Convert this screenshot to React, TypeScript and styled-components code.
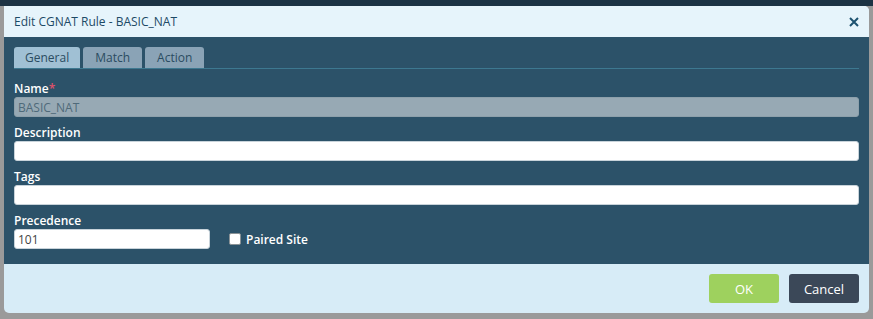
import React from 'react'
import styled, { createGlobalStyle } from 'styled-components'

const GlobalStyle = createGlobalStyle`
  html, body {
    margin: 0;
    padding: 0;
    background: #9a9a9a;
    font-family: "Open Sans", "Liberation Sans", sans-serif;
  }
`

const Page = styled.div`
  width: 873px;
  height: 319px;
  background: #9a9a9a;
  border-top: 6px solid #1c3344;
  box-sizing: border-box;
  padding: 0 4px;
`

const Dialog = styled.div`
  display: flex;
  flex-direction: column;
  height: 307px;
  border-radius: 0 5px 5px 5px;
  overflow: hidden;
  background: #d7ecf7;
`

const Header = styled.div`
  display: flex;
  align-items: center;
  justify-content: space-between;
  height: 31px;
  padding: 0 10px 0 10px;
  background: #e6f4fb;
`

const Title = styled.span`
  font-size: 12px;
  color: #1d4a66;
`

const CloseButton = styled.button`
  border: none;
  background: none;
  padding: 0;
  display: flex;
  cursor: pointer;
`

const Body = styled.div`
  background: #2c5269;
  padding: 10px 10px 0 10px;
  height: 227px;
  box-sizing: border-box;
`

const TabBar = styled.div`
  display: flex;
  gap: 3px;
  border-bottom: 1px solid #3d7890;
  margin-bottom: 12px;
`

const Tab = styled.div<{ $active?: boolean }>`
  height: 21px;
  min-width: 59px;
  box-sizing: border-box;
  padding: 0 11px;
  display: flex;
  align-items: center;
  justify-content: center;
  font-size: 12px;
  color: #2b4c61;
  background: ${({ $active }) => ($active ? '#a0c0d4' : '#8aa3b6')};
  border-radius: 3px 3px 0 0;
`

const Field = styled.div`
  display: flex;
  flex-direction: column;
  margin-bottom: 8px;
`

const Label = styled.label`
  font-size: 12px;
  font-weight: 600;
  color: #ffffff;
  line-height: 16px;
`

const Required = styled.span`
  color: #e0506a;
`

const Input = styled.input<{ $disabled?: boolean; $width?: number }>`
  box-sizing: border-box;
  height: 20px;
  width: ${({ $width }) => ($width ? `${$width}px` : '100%')};
  border: 1px solid ${({ $disabled }) => ($disabled ? '#8da0ab' : '#c8d3da')};
  border-radius: 3px;
  padding: 0 3px;
  font-family: "Open Sans", "Liberation Sans", sans-serif;
  font-size: 12px;
  color: ${({ $disabled }) => ($disabled ? '#4f6a7a' : '#444')};
  background: ${({ $disabled }) => ($disabled ? '#97a9b4' : '#ffffff')};
  outline: none;
`

const Row = styled.div`
  display: flex;
  align-items: center;
  gap: 19px;
`

const CheckLabel = styled.label`
  display: flex;
  align-items: center;
  gap: 5px;
  font-size: 12px;
  font-weight: 600;
  color: #ffffff;
`

const Box = styled.span`
  box-sizing: border-box;
  width: 12px;
  height: 12px;
  background: #fff;
  border: 1px solid #8a9296;
  border-radius: 2px;
`

const Footer = styled.div`
  flex: 1;
  display: flex;
  justify-content: flex-end;
  align-items: flex-start;
  gap: 10px;
  padding: 10px 10px 0 0;
`

const Button = styled.button<{ $primary?: boolean }>`
  width: 70px;
  height: 29px;
  border: none;
  border-radius: 3px;
  font-family: "Open Sans", "Liberation Sans", sans-serif;
  font-size: 13px;
  color: #fff;
  background: ${({ $primary }) => ($primary ? '#9ed15e' : '#3b4858')};
`

export default function App() {
  return (
    <>
      <GlobalStyle />
      <Page>
        <Dialog>
          <Header>
            <Title>Edit CGNAT Rule - BASIC_NAT</Title>
            <CloseButton>
              <svg width="10" height="10" viewBox="0 0 10 10">
                <path d="M1 1L9 9M9 1L1 9" stroke="#1d5270" strokeWidth="2" />
              </svg>
            </CloseButton>
          </Header>
          <Body>
            <TabBar>
              <Tab $active>General</Tab>
              <Tab>Match</Tab>
              <Tab>Action</Tab>
            </TabBar>
            <Field>
              <Label>
                Name<Required>*</Required>
              </Label>
              <Input $disabled readOnly value="BASIC_NAT" />
            </Field>
            <Field>
              <Label>Description</Label>
              <Input readOnly value="" />
            </Field>
            <Field>
              <Label>Tags</Label>
              <Input readOnly value="" />
            </Field>
            <Field>
              <Label>Precedence</Label>
              <Row>
                <Input $width={196} readOnly value="101" />
                <CheckLabel>
                  <Box />
                  Paired Site
                </CheckLabel>
              </Row>
            </Field>
          </Body>
          <Footer>
            <Button $primary>OK</Button>
            <Button>Cancel</Button>
          </Footer>
        </Dialog>
      </Page>
    </>
  )
}
